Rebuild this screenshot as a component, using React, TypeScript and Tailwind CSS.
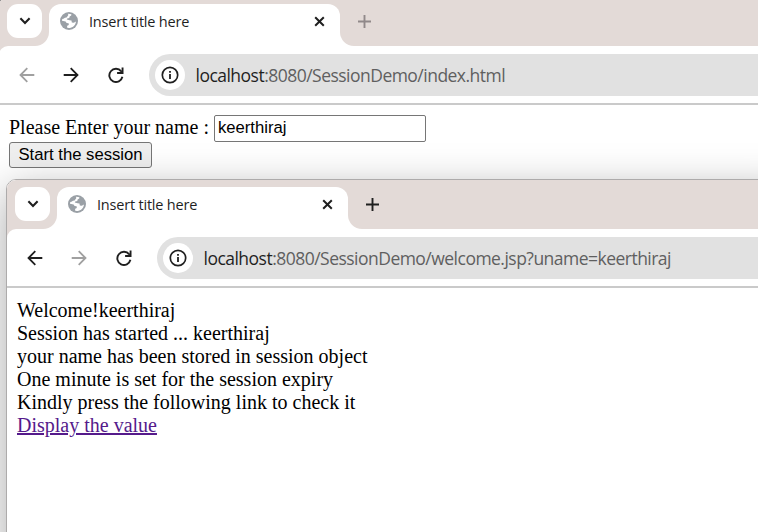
import type { ReactNode } from "react";

function Globe() {
  return (
    <svg width="18" height="18" viewBox="0 0 18 18">
      <circle cx="9" cy="9" r="9" fill="#9aa0a6" />
      <path
        d="M8.6 1.8 11.4 2.2 11.2 3.5 9.6 4.5 9.3 6 7.2 6.4 6.8 7.6 9.6 8.2 11.5 8.6 11.8 10.4 13.8 10.7 16 9.4C15.6 13.2 12.6 16 8.6 16L7 15.6 7.2 13.8 8.8 13 8.6 11.3 6.6 11 5.6 9.5 2 8.8C2.2 4.8 5 2 8.6 1.8Z"
        fill="#fff"
      />
      <path d="M2.6 7.2 5 5.8 6.6 5.4 8.4 3 7.6 1.2 4 2.6 1.6 6Z" fill="#9aa0a6" />
    </svg>
  );
}

function Arrow({ forward, color }: { forward?: boolean; color: string }) {
  return (
    <svg
      width="16"
      height="16"
      viewBox="0 0 16 16"
      fill="none"
      stroke={color}
      strokeWidth="1.8"
      className={forward ? "rotate-180" : ""}
    >
      <path d="M15.3 8H2M8.3 1.2 1.5 8l6.8 6.8" />
    </svg>
  );
}

function Reload() {
  return (
    <svg width="16" height="16" viewBox="0 0 16 16">
      <path d="M13.2 4.4A6.6 6.6 0 1 0 14.4 9.8" fill="none" stroke="#1f1f1f" strokeWidth="1.9" />
      <path d="M15.5 0.5V6.9H9.1V5H12.6L13.6 3.6V0.5Z" fill="#1f1f1f" />
    </svg>
  );
}

function Info() {
  return (
    <svg width="18" height="18" viewBox="0 0 18 18" fill="none" stroke="#1f1f1f">
      <circle cx="9" cy="9" r="7.7" strokeWidth="1.7" />
      <path d="M9 8v5M9 5v1.8" strokeWidth="1.8" />
    </svg>
  );
}

type WindowProps = {
  path: string;
  canGoBack?: boolean;
  active?: boolean;
  children: ReactNode;
};

function BrowserWindow({ path, canGoBack, active, children }: WindowProps) {
  const enabled = "#1f1f1f";
  const disabled = "#a0a0a0";
  return (
    <div className="flex h-full flex-col overflow-hidden rounded-tl-[9px] bg-white">
      <div className="flex h-[49px] shrink-0">
        <div className="w-[50px] rounded-br-[14px] bg-[#e3dad7] pt-[7px] pl-2">
          <div className="flex h-[34px] w-[35px] items-center justify-center rounded-[11px] bg-white">
            <svg width="12" height="8" viewBox="0 0 12 8" fill="none" stroke="#1f1f1f" strokeWidth="2.1">
              <path d="M1.4 1.3 6 5.9l4.6-4.6" />
            </svg>
          </div>
        </div>
        <div className="w-[290.5px] bg-[linear-gradient(#e3dad7_30px,#fff_30px)] pt-[6.5px]">
          <div className="flex h-full items-center rounded-t-[12px] bg-white pr-[15px] pb-[7px] pl-[11px]">
            <Globe />
            <span className="ml-[11px] pt-[2px] whitespace-nowrap font-['Open_Sans','Noto_Sans',sans-serif] text-[14.5px] tracking-[-0.2px] text-[#1f1f1f]">
              Insert title here
            </span>
            <svg className="ml-auto" width="11" height="11" viewBox="0 0 11 11" stroke="#1f1f1f" strokeWidth="2">
              <path d="m1.2 1.2 8.6 8.6M9.8 1.2l-8.6 8.6" />
            </svg>
          </div>
        </div>
        <div className="flex-1 rounded-bl-[14px] bg-[#e3dad7] pt-[18px] pl-[18.5px]">
          <svg width="13" height="13" viewBox="0 0 13 13" stroke={active ? enabled : "#91898a"} strokeWidth="1.9">
            <path d="M6.5 0v13M0 6.5h13" />
          </svg>
        </div>
      </div>
      <div className="h-[57px] shrink-0 bg-[linear-gradient(90deg,#e3dad7_20px,#fff_20px)]">
        <div className="flex h-full items-center rounded-tl-[9px] bg-white pl-[19.5px]">
          <Arrow color={canGoBack ? enabled : disabled} />
          <div className="ml-[28.5px]">
            <Arrow forward color={canGoBack ? disabled : enabled} />
          </div>
          <div className="ml-[29px]">
            <Reload />
          </div>
          <div className="ml-[25px] flex h-[42px] flex-1 items-center rounded-l-full bg-[#e1e1e1] pl-[6px]">
            <div className="flex size-[30px] items-center justify-center rounded-full bg-white">
              <Info />
            </div>
            <span className="ml-[10.5px] pt-[2px] whitespace-nowrap font-['Open_Sans','Noto_Sans',sans-serif] text-[17.5px] tracking-[-0.52px] text-[#5f5f5f]">
              <span className="text-[#1f1f1f]">localhost</span>
              {path}
            </span>
          </div>
        </div>
      </div>
      <div className="h-[2px] shrink-0 bg-[#cacaca]" />
      <div className="flex-1 p-[10px] font-['Liberation_Serif',serif] text-[20px] leading-[23px] text-black">
        {children}
      </div>
    </div>
  );
}

const lines = [
  "Welcome!keerthiraj",
  "Session has started ... keerthiraj",
  "your name has been stored in session object",
  "One minute is set for the session expiry",
  "Kindly press the following link to check it",
];

export default function App() {
  return (
    <div className="relative h-[532px] w-[758px] overflow-hidden bg-[#777]">
      <div className="absolute -top-[3px] -left-px h-[540px] w-[760px]">
        <BrowserWindow path=":8080/SessionDemo/index.html">
          <div className="flex items-center">
            <span className="pb-[2px] whitespace-pre">Please Enter your name : </span>
            <input
              defaultValue="keerthiraj"
              className="h-[27px] w-[212px] rounded-[2px] border border-[#767676] bg-white px-[3px] pb-[2px] font-['Liberation_Sans',sans-serif] text-[16.67px] text-black"
            />
          </div>
          <button className="block h-[26px] w-[143px] rounded-[3px] border border-[#767676] bg-[#efefef] font-['Liberation_Sans',sans-serif] text-[16.67px] leading-[22px] whitespace-nowrap">
            Start the session
          </button>
        </BrowserWindow>
      </div>
      <div className="absolute top-[179px] left-[6px] h-[380px] w-[790px] rounded-tl-[10px] border border-[#adabab] shadow-[0_12px_44px_rgba(0,0,0,0.34)]">
        <BrowserWindow path=":8080/SessionDemo/welcome.jsp?uname=keerthiraj" canGoBack active>
          <div className="pt-px">
            {lines.map((line) => (
              <p key={line}>{line}</p>
            ))}
            <a className="text-[#551a8b] underline">Display the value</a>
          </div>
        </BrowserWindow>
      </div>
    </div>
  );
}
